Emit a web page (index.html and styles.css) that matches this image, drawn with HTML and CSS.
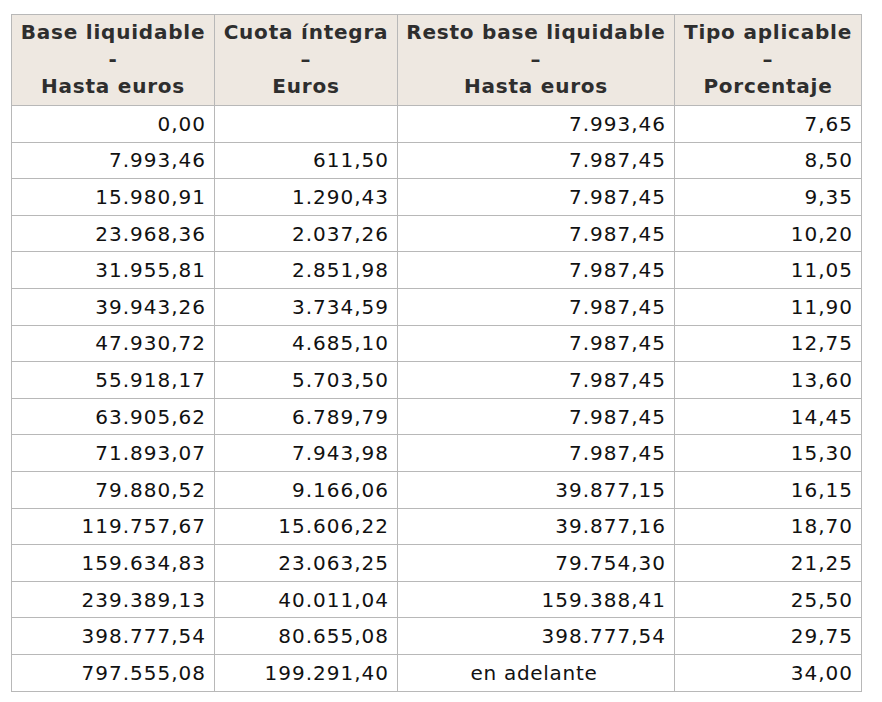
FILE: index.html
```html
<!DOCTYPE html>
<html lang="es">
<head>
<meta charset="utf-8">
<link rel="stylesheet" href="styles.css">
</head>
<body>
<table class="tabla">
<colgroup>
<col class="c1"><col class="c2"><col class="c3"><col class="c4">
</colgroup>
<thead>
<tr>
<th>Base liquidable<br>-<br>Hasta euros</th>
<th>Cuota íntegra<br>–<br>Euros</th>
<th>Resto base liquidable<br>–<br>Hasta euros</th>
<th>Tipo aplicable<br>–<br>Porcentaje</th>
</tr>
</thead>
<tbody>
<tr><td>0,00</td><td></td><td>7.993,46</td><td>7,65</td></tr>
<tr><td>7.993,46</td><td>611,50</td><td>7.987,45</td><td>8,50</td></tr>
<tr><td>15.980,91</td><td>1.290,43</td><td>7.987,45</td><td>9,35</td></tr>
<tr><td>23.968,36</td><td>2.037,26</td><td>7.987,45</td><td>10,20</td></tr>
<tr><td>31.955,81</td><td>2.851,98</td><td>7.987,45</td><td>11,05</td></tr>
<tr><td>39.943,26</td><td>3.734,59</td><td>7.987,45</td><td>11,90</td></tr>
<tr><td>47.930,72</td><td>4.685,10</td><td>7.987,45</td><td>12,75</td></tr>
<tr><td>55.918,17</td><td>5.703,50</td><td>7.987,45</td><td>13,60</td></tr>
<tr><td>63.905,62</td><td>6.789,79</td><td>7.987,45</td><td>14,45</td></tr>
<tr><td>71.893,07</td><td>7.943,98</td><td>7.987,45</td><td>15,30</td></tr>
<tr><td>79.880,52</td><td>9.166,06</td><td>39.877,15</td><td>16,15</td></tr>
<tr><td>119.757,67</td><td>15.606,22</td><td>39.877,16</td><td>18,70</td></tr>
<tr><td>159.634,83</td><td>23.063,25</td><td>79.754,30</td><td>21,25</td></tr>
<tr><td>239.389,13</td><td>40.011,04</td><td>159.388,41</td><td>25,50</td></tr>
<tr><td>398.777,54</td><td>80.655,08</td><td>398.777,54</td><td>29,75</td></tr>
<tr><td>797.555,08</td><td>199.291,40</td><td class="centro">en adelante</td><td>34,00</td></tr>
</tbody>
</table>
</body>
</html>
```
FILE: styles.css
```css
html, body {
  margin: 0;
  padding: 0;
  background: #ffffff;
}
body {
  padding: 14px 0 0 11px;
  font-family: "DejaVu Sans", Verdana, sans-serif;
  font-size: 20px;
  color: #111;
}
.tabla {
  border-collapse: collapse;
  table-layout: fixed;
  width: 850px;
}
.c1 { width: 203px; }
.c2 { width: 183px; }
.c3 { width: 277px; }
.c4 { width: 187px; }
.tabla th,
.tabla td {
  border: 1px solid #b8b8b8;
}
.tabla th {
  background: #eee8e1;
  color: #2e2e2e;
  font-weight: bold;
  text-align: center;
  line-height: 27px;
  height: 89px;
  padding: 4px 0 5px;
  box-sizing: border-box;
  white-space: nowrap;
  letter-spacing: 0.78px;
}
.tabla td {
  text-align: right;
  padding: 0 8px 0 4px;
  height: 36.6px;
  box-sizing: border-box;
  line-height: 24px;
  white-space: nowrap;
  letter-spacing: 1px;
}
.tabla td.centro {
  text-align: center;
  letter-spacing: 0.7px;
}
```
